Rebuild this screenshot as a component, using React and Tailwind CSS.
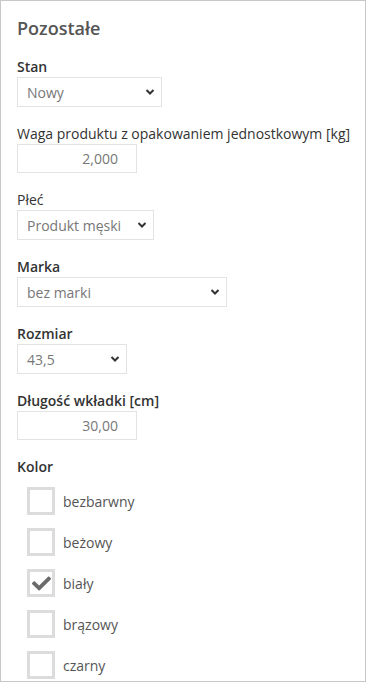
import { useState } from 'react';
import { FaCheck } from 'react-icons/fa';

function Chevron() {
    return (
        <svg width="10" height="10" viewBox="0 0 10 10" className="shrink-0">
            <polyline points="1.5 3 5 6.5 8.5 3" fill="none" stroke="#333" strokeWidth="2" />
        </svg>
    );
}

function Select({ value, width }) {
    return (
        <div className={`flex items-center justify-between h-[30px] border border-[#e3e3e3] pl-[9px] pr-[6px] text-[14px] text-[#777] ${width}`}>
            <span>{value}</span>
            <Chevron />
        </div>
    );
}

function NumberInput({ value, width }) {
    return (
        <div className={`flex items-center justify-end h-[29px] border border-[#e3e3e3] pl-[9px] pr-[18px] text-[14px] text-[#777] ${width}`}>
            {value}
        </div>
    );
}

function Field({ label, bold, children }) {
    return (
        <div className="flex flex-col">
            <div className={`text-[14px] leading-[20px] text-[#333] ${bold ? 'font-semibold' : ''}`}>{label}</div>
            {children}
        </div>
    );
}

export default function App() {
    const [colors, setColors] = useState({ 'biały': true });
    const colorList = ['bezbarwny', 'beżowy', 'biały', 'brązowy', 'czarny'];

    return (
        <div className="w-[366px] h-[682px] border border-[#c8c8c8] bg-white overflow-hidden" style={{ fontFamily: '"Open Sans", sans-serif' }}>
            <div className="pl-[16px] pt-[15px] flex flex-col">
                <h2 className="text-[18px] leading-[24px] font-semibold text-[#555] mb-[17px]">Pozostałe</h2>

                <div className="flex flex-col gap-[17px]">
                    <Field label="Stan" bold>
                        <Select value="Nowy" width="w-[145px]" />
                    </Field>
                    <Field label="Waga produktu z opakowaniem jednostkowym [kg]">
                        <NumberInput value="2,000" width="w-[120px]" />
                    </Field>
                    <Field label="Płeć">
                        <Select value="Produkt męski" width="w-[137px]" />
                    </Field>
                    <Field label="Marka" bold>
                        <Select value="bez marki" width="w-[210px]" />
                    </Field>
                    <Field label="Rozmiar" bold>
                        <Select value="43,5" width="w-[110px]" />
                    </Field>
                    <Field label="Długość wkładki [cm]" bold>
                        <NumberInput value="30,00" width="w-[120px]" />
                    </Field>
                    <Field label="Kolor" bold>
                        <div className="flex flex-col gap-[13px] pl-[10px] pt-[10px]">
                            {colorList.map(c => (
                                <label key={c} className="flex items-center gap-[8px] cursor-pointer" onClick={() => setColors({ ...colors, [c]: !colors[c] })}>
                                    <span className="w-[28px] h-[28px] border-[3px] border-[#dcdcdc] flex items-center justify-center">
                                        {colors[c] && <FaCheck size={19} color="#6b6b6b" />}
                                    </span>
                                    <span className="text-[14px] text-[#555]">{c}</span>
                                </label>
                            ))}
                        </div>
                    </Field>
                </div>
            </div>
        </div>
    );
}
